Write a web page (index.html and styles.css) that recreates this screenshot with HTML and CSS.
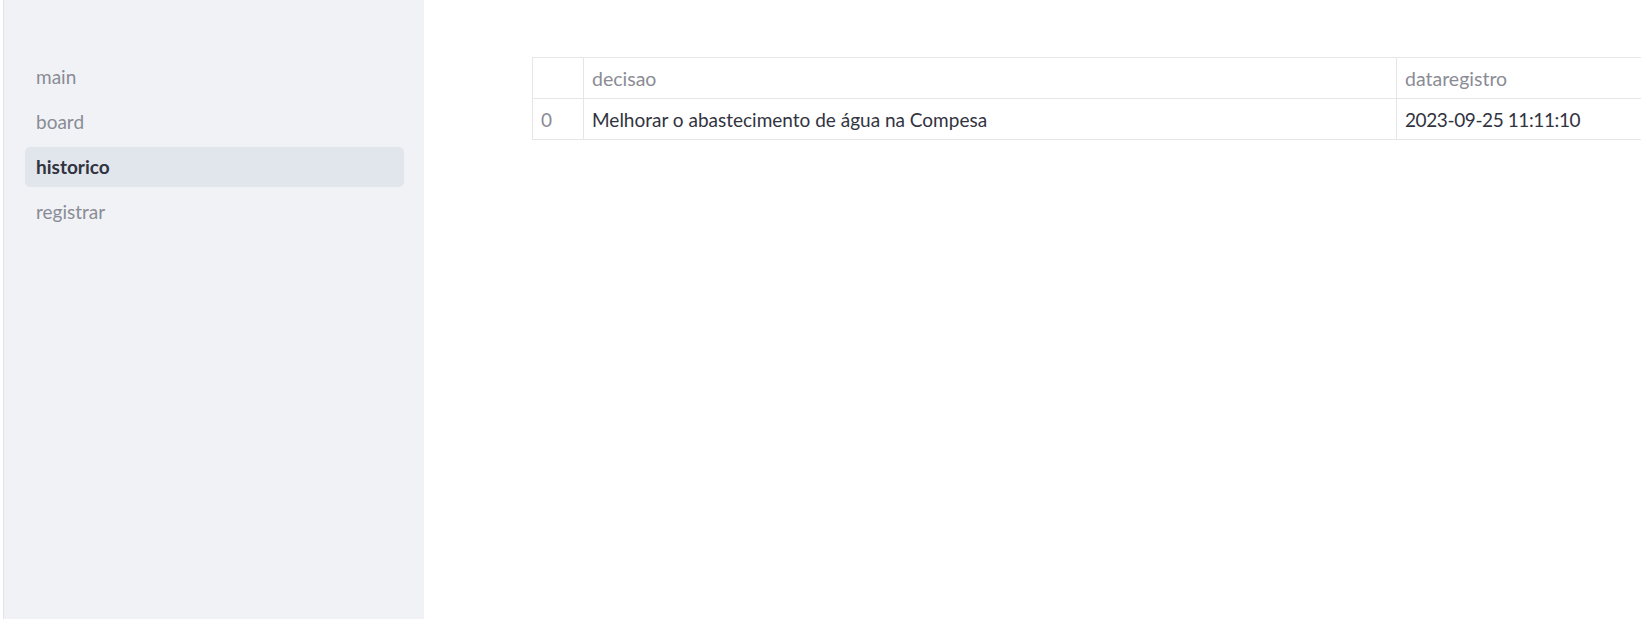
FILE: index.html
```html
<!DOCTYPE html>
<html lang="pt">
<head>
<meta charset="utf-8">
<title>historico</title>
<link rel="stylesheet" href="styles.css">
</head>
<body>
<div class="app">
  <aside class="sidebar">
    <nav class="nav">
      <a class="nav-item">main</a>
      <a class="nav-item">board</a>
      <a class="nav-item active">historico</a>
      <a class="nav-item">registrar</a>
    </nav>
  </aside>
  <main class="main">
    <div class="table-wrap">
      <table class="df">
        <thead>
          <tr><th class="idx"></th><th class="c1">decisao</th><th class="c2">dataregistro</th></tr>
        </thead>
        <tbody>
          <tr><td class="idx">0</td><td>Melhorar o abastecimento de água na Compesa</td><td class="date">2023-09-25 11:11:10</td></tr>
        </tbody>
      </table>
    </div>
  </main>
</div>
</body>
</html>
```
FILE: styles.css
```css
html, body {
  margin: 0;
  padding: 0;
  background: #ffffff;
  overflow: hidden;
}
body {
  font-family: "Lato", "Liberation Sans", sans-serif;
  color: #31333f;
}
.app {
  display: flex;
  height: 619px;
  width: 1641px;
}
.sidebar {
  width: 421px;
  margin-left: 3px;
  border-left: 1px solid #e2e3e6;
  background: #f0f2f6;
  flex: none;
  box-sizing: border-box;
  padding: 56px 20px 0 21px;
}
.nav {
  display: flex;
  flex-direction: column;
  gap: 5.3px;
}
.nav-item {
  display: flex;
  align-items: center;
  height: 40px;
  padding-left: 11px;
  border-radius: 5px;
  font-size: 19px;
  color: #8a8c95;
  text-decoration: none;
}
.nav-item.active {
  background: #e1e5ec;
  color: #31333f;
  font-weight: 700;
}
.main {
  flex: 1;
  min-width: 0;
  padding: 57px 0 0 108px;
  overflow: hidden;
}
.df {
  border-collapse: collapse;
  table-layout: fixed;
  width: 1400px;
  font-size: 19px;
}
.df th, .df td {
  border: 1px solid #e6e6e9;
  height: 41px;
  padding: 0 8px;
  text-align: left;
  white-space: nowrap;
  box-sizing: border-box;
}
.df th {
  font-weight: 400;
  font-size: 19.5px;
  color: #8a8c95;
}
.df td.idx {
  color: #8a8c95;
}
.df td.date {
  letter-spacing: -0.4px;
}
.df .idx { width: 51px; }
.df .c1 { width: 813px; }
```
